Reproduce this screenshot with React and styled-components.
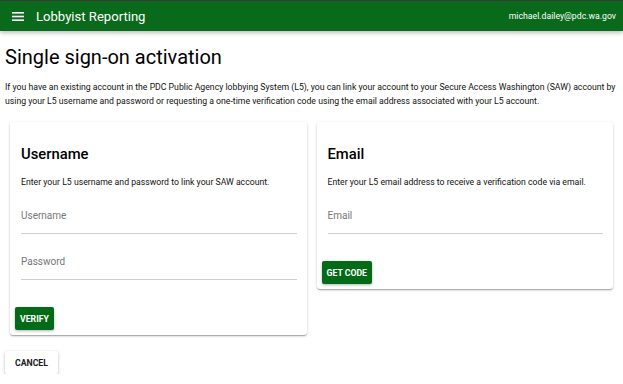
import styled, { createGlobalStyle } from "styled-components";

const GlobalStyle = createGlobalStyle`
  body {
    margin: 0;
    background: #ffffff;
    font-family: Roboto, "Liberation Sans", Arial, sans-serif;
    color: rgba(0, 0, 0, 0.87);
  }
`;

export default function App() {
  return (
    <>
      <GlobalStyle />
      <AppBar>
        <MenuButton aria-label="menu">
          <svg width="12" height="9" viewBox="0 0 12 9" fill="#ffffff">
            <rect x="0" y="0" width="12" height="1.6" />
            <rect x="0" y="3.7" width="12" height="1.6" />
            <rect x="0" y="7.4" width="12" height="1.6" />
          </svg>
        </MenuButton>
        <AppTitle>Lobbyist Reporting</AppTitle>
        <UserEmail>michael.dailey@pdc.wa.gov</UserEmail>
      </AppBar>
      <Main>
        <PageTitle>Single sign-on activation</PageTitle>
        <Intro>
          If you have an existing account in the PDC Public Agency lobbying
          System (L5), you can link your account to your Secure Access
          Washington (SAW) account by using your L5 username and password or
          requesting a one-time verification code using the email address
          associated with your L5 account.
        </Intro>
        <CardRow>
          <Card>
            <CardBody>
              <CardTitle>Username</CardTitle>
              <CardText>
                Enter your L5 username and password to link your SAW account.
              </CardText>
              <Field>
                <FieldLabel>Username</FieldLabel>
              </Field>
              <Field>
                <FieldLabel>Password</FieldLabel>
              </Field>
            </CardBody>
            <CardActions>
              <PrimaryButton>Verify</PrimaryButton>
            </CardActions>
          </Card>
          <Card>
            <CardBody>
              <CardTitle>Email</CardTitle>
              <CardText>
                Enter your L5 email address to receive a verification code via
                email.
              </CardText>
              <Field>
                <FieldLabel>Email</FieldLabel>
              </Field>
            </CardBody>
            <CardActions>
              <PrimaryButton>Get code</PrimaryButton>
            </CardActions>
          </Card>
        </CardRow>
        <Footer>
          <SecondaryButton>Cancel</SecondaryButton>
        </Footer>
      </Main>
    </>
  );
}

const AppBar = styled.header`
  height: 30px;
  display: flex;
  align-items: center;
  padding: 0 7px 0 12px;
  background: #086a1a;
  border-top: 1px solid #3a3a3a;
  color: #ffffff;
  box-shadow: 0 2px 4px rgba(0, 0, 0, 0.25);
  position: relative;
`;

const MenuButton = styled.div`
  display: flex;
  align-items: center;
  width: 12px;
  height: 9px;
  margin-right: 12px;
`;

const AppTitle = styled.div`
  font-size: 13.1px;
  flex: 1;
`;

const UserEmail = styled.div`
  font-size: 8.7px;
`;

const Main = styled.main`
  padding: 0 5px;
`;

const PageTitle = styled.h1`
  margin: 11px 0 0;
  font-size: 20px;
  font-weight: 400;
  line-height: 30px;
  color: #000;
`;

const Intro = styled.p`
  margin: 8px 0 0;
  font-size: 8.7px;
  line-height: 14px;
  color: #111;
`;

const CardRow = styled.div`
  display: flex;
  align-items: flex-start;
  gap: 10px;
  margin: 14px 5px 0;
`;

const Card = styled.section`
  flex: 1;
  background: #fff;
  border-radius: 3px;
  box-shadow: 0 1px 3px rgba(0, 0, 0, 0.2), 0 1px 1px rgba(0, 0, 0, 0.14),
    0 2px 1px -1px rgba(0, 0, 0, 0.12);
`;

const CardBody = styled.div`
  padding: 21px 10px 0 11px;
`;

const CardTitle = styled.h2`
  margin: 0;
  font-size: 14.8px;
  font-weight: 500;
  line-height: 22px;
  color: #000;
`;

const CardText = styled.p`
  margin: 11px 0 0;
  font-size: 8.7px;
  line-height: 12px;
  color: #111;
`;

const Field = styled.div`
  height: 31px;
  margin-top: 14px;
  display: flex;
  align-items: flex-end;
  border-bottom: 1px solid #cfcfcf;
`;

const FieldLabel = styled.span`
  font-size: 10px;
  color: #777;
  padding-bottom: 12px;
`;

const CardActions = styled.div`
  padding: 27px 5px 5px;
  display: flex;
`;

const PrimaryButton = styled.button`
  height: 23px;
  padding: 0 5px;
  border: none;
  border-radius: 2px;
  background: #036b17;
  color: #fff;
  font-family: inherit;
  font-size: 8.7px;
  font-weight: 700;
  text-transform: uppercase;
  box-shadow: 0 1px 3px rgba(0, 0, 0, 0.3);
`;

const Footer = styled.div`
  margin-top: 16px;
  display: flex;
`;

const SecondaryButton = styled(PrimaryButton)`
  width: 53px;
  background: #fff;
  color: #1a1a1a;
`;
